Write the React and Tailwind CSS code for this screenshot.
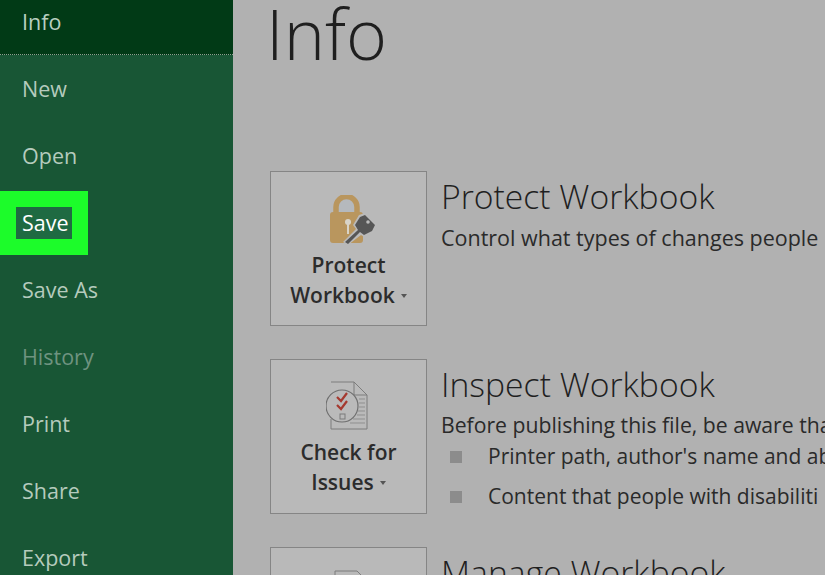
import React from 'react';

const font = { fontFamily: '"Open Sans", "Noto Sans", sans-serif' };

const menuItems = ['Info', 'New', 'Open', 'Save', 'Save As', 'History', 'Print', 'Share', 'Export'];

function MenuItem({ label }) {
    if (label === 'Info') {
        return (
            <div className="h-[67px] shrink-0 flex items-center pt-[2px] pl-[22px] bg-[#013a16] border-b border-dotted border-[#8f9f92] text-[#b9cfc0]">
                {label}
            </div>
        );
    }
    if (label === 'Save') {
        return (
            <div className="relative h-[67px] shrink-0">
                <div className="absolute left-0 top-[2px] w-[88px] h-[64px] bg-[#1cfc2a] flex items-center pl-[16px]">
                    <span className="w-[56px] h-[32px] bg-[#1f6a42] text-white flex items-center pl-[6px]">{label}</span>
                </div>
            </div>
        );
    }
    return (
        <div className={`h-[67px] shrink-0 flex items-center pt-[2px] pl-[22px] ${label === 'History' ? 'text-[#6f9380]' : 'text-[#b5cbbd]'}`}>
            {label}
        </div>
    );
}

function LockIcon() {
    return (
        <svg width="48" height="50" viewBox="0 0 48 50" className="ml-[9px]">
            <path d="M7 18 V12 A10.500 10.500 0 0 1 28 12 V18" fill="#b5b9bd" stroke="#b9965e" strokeWidth="5.500" />
            <rect x="1" y="17" width="33" height="31" rx="3" fill="#b9965e" />
            <circle cx="19" cy="27" r="3" fill="#d9d4c8" />
            <rect x="18" y="28" width="2" height="11" fill="#d9d4c8" />
            <path d="M14 47 L27 34 L24 30 L30 20 L36 18 L48 29 L44 38 L35 42 L32 40 L19 50 Z" fill="#bababa" />
            <path d="M16 47 L29 35 L26 30 L31 22 L36 20 L46 30 L43 36 L35 40 L31 37 L19 49 Z" fill="#565656" />
            <circle cx="39" cy="27" r="1.800" fill="#bababa" />
        </svg>
    );
}

function CheckIcon() {
    return (
        <svg width="44" height="50" viewBox="0 0 44 50" className="-ml-[1px]">
            <path d="M5 1 H28 L41 14 V48 H5 V38" fill="#bababa" stroke="#7d7d7d" strokeWidth="1" />
            <path d="M28 1 V14 H41" fill="none" stroke="#7d7d7d" strokeWidth="1" />
            <path d="M33 18 H39 M33 22 H39 M33 26 H39 M32 30 H39 M31 34 H39 M27 38 H39 M24 42 H39" stroke="#8f8f8f" strokeWidth="1" />
            <circle cx="16" cy="25" r="16" fill="#bababa" stroke="#6f6f6f" strokeWidth="1.200" />
            <path d="M11 16 L15 20 L21 12 M11 24 L15 28 L21 20" fill="none" stroke="#a5392f" strokeWidth="2.200" />
            <rect x="14" y="33" width="5" height="5" fill="none" stroke="#7a7a7a" strokeWidth="1" />
        </svg>
    );
}

function DocIcon() {
    return (
        <svg width="30" height="29" viewBox="0 0 30 29" className="mt-[22px]">
            <path d="M1 29 V1 H23 L29 7 V29" fill="none" stroke="#7d7d7d" strokeWidth="1" />
        </svg>
    );
}

function ToolButton({ icon, lines, pad, textGap }) {
    return (
        <div className={`w-[157px] h-[155px] shrink-0 border border-[#858585] bg-[#b9b9b9] flex flex-col items-center ${pad}`}>
            {icon}
            {lines && (
                <div className={`${textGap} text-[21px] leading-[30px] font-semibold text-[#2c2c2c] text-center`}>
                    <div>{lines[0]}</div>
                    <div className="flex items-center justify-center">
                        {lines[1]}
                        <span className="ml-[6px] mt-[2px] w-0 h-0 border-x-[3.500px] border-x-transparent border-t-[4px] border-t-[#555555]" />
                    </div>
                </div>
            )}
        </div>
    );
}

function Section({ icon, lines, pad, textGap, title, children }) {
    return (
        <div className="flex gap-[14px] h-[155px] mb-[33px]">
            <ToolButton icon={icon} lines={lines} pad={pad} textGap={textGap} />
            <div className="min-w-0 whitespace-nowrap">
                <h2 className="text-[33.700px] leading-[45px] font-light text-[#1f1f1f] mt-[3px]">{title}</h2>
                {children}
            </div>
        </div>
    );
}

function Bullet({ text }) {
    return (
        <div className="flex items-center h-[36px] mb-[4px] text-[#2a2a2a] text-[21px]">
            <span className="w-[12px] h-[12px] bg-[#8c8c8c] ml-[9px] mr-[26px] shrink-0" />
            {text}
        </div>
    );
}

export default function App() {
    return (
        <div className="w-[825px] h-[575px] overflow-hidden flex bg-[#b1b1b1]" style={font}>
            <div className="w-[233px] h-[575px] shrink-0 overflow-hidden bg-[#185635] text-[21.500px]">
                <div className="-mt-[12px] flex flex-col">
                    {menuItems.map(label => (
                        <MenuItem key={label} label={label} />
                    ))}
                </div>
            </div>
            <div className="flex-1 min-w-0 overflow-hidden pl-[37px]">
                <h1 className="h-[171px] -ml-[4px] text-[70px] leading-[66px] font-light text-[#1f1f1f]">Info</h1>
                <Section
                    icon={<LockIcon />}
                    lines={['Protect', 'Workbook']}
                    pad="pt-[23px]"
                    textGap="mt-[5px]"
                    title="Protect Workbook"
                >
                    <p className="mt-[4px] text-[21.500px] leading-[30px] text-[#2a2a2a]">Control what types of changes people</p>
                </Section>
                <Section
                    icon={<CheckIcon />}
                    lines={['Check for', 'Issues']}
                    pad="pt-[21px]"
                    textGap="mt-[6px]"
                    title="Inspect Workbook"
                >
                    <p className="mt-[3px] -mb-[1px] text-[21.200px] leading-[30px] text-[#2a2a2a]">Before publishing this file, be aware tha</p>
                    <Bullet text="Printer path, author's name and ab" />
                    <Bullet text="Content that people with disabiliti" />
                </Section>
                <Section icon={<DocIcon />} title="Manage Workbook" />
            </div>
        </div>
    );
}
